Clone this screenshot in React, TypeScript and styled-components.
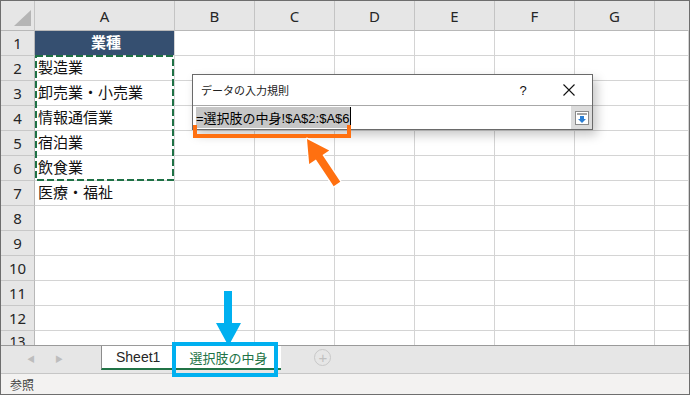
import React from 'react';
import styled, { createGlobalStyle } from 'styled-components';

const GlobalStyle = createGlobalStyle`
  html, body {
    margin: 0;
    padding: 0;
    background: #ffffff;
  }
  * {
    box-sizing: border-box;
  }
`;

const JP = `"Liberation Sans", "Noto Sans CJK JP", sans-serif`;

const columns = ['A', 'B', 'C', 'D', 'E', 'F', 'G', ''];
const cells: { [row: number]: string } = {
  2: '製造業',
  3: '卸売業・小売業',
  4: '情報通信業',
  5: '宿泊業',
  6: '飲食業',
  7: '医療・福祉',
};

const Frame = styled.div`
  position: relative;
  width: 690px;
  height: 395px;
  border: 1px solid #6e6e6e;
  display: flex;
  flex-direction: column;
  overflow: hidden;
  font-family: ${JP};
`;

const Sheet = styled.div`
  height: 344px;
  overflow: hidden;
  display: grid;
  grid-template-columns: 34px 140px repeat(6, 80px) 1fr;
  grid-template-rows: 30px repeat(12, 25px) 20px;
`;

const HeadCell = styled.div<{ $last?: boolean }>`
  background: #e6e6e6;
  border-right: 1px solid ${(p) => (p.$last ? '#e6e6e6' : '#c4c4c4')};
  border-bottom: 1px solid #b8b8b8;
  display: flex;
  align-items: center;
  justify-content: center;
  font-family: "Noto Sans", "Liberation Sans", sans-serif;
  font-size: 15px;
  color: #262626;
  padding-top: 1px;
`;

const Corner = styled(HeadCell)`
  align-items: flex-end;
  justify-content: flex-end;
  padding: 0 3px 4px 0;
`;

const RowHead = styled.div<{ $clipped?: boolean }>`
  background: #e6e6e6;
  border-right: 1px solid #b8b8b8;
  border-bottom: ${(p) => (p.$clipped ? 'none' : '1px solid #c8c8c8')};
  display: flex;
  align-items: ${(p) => (p.$clipped ? 'flex-start' : 'center')};
  justify-content: center;
  font-family: "Noto Sans", "Liberation Sans", sans-serif;
  font-size: ${(p) => (p.$clipped ? '14px' : '15px')};
  line-height: ${(p) => (p.$clipped ? '18px' : 'normal')};
  padding-top: ${(p) => (p.$clipped ? '2px' : '0')};
  color: #262626;
`;

const Cell = styled.div<{ $title?: boolean }>`
  border-right: 1px solid #d4d4d4;
  border-bottom: 1px solid #d4d4d4;
  background: ${(p) => (p.$title ? '#354f70' : '#ffffff')};
  color: ${(p) => (p.$title ? '#ffffff' : '#111111')};
  font-weight: ${(p) => (p.$title ? 700 : 400)};
  justify-content: ${(p) => (p.$title ? 'center' : 'flex-start')};
  display: flex;
  align-items: center;
  padding: 0 0 3px 3px;
  font-size: 15px;
  white-space: nowrap;
  overflow: visible;
`;

const TabBar = styled.div`
  height: 28px;
  background: #e6e6e6;
  border-top: 1px solid #9a9a9a;
  display: flex;
  align-items: flex-start;
`;

const Nav = styled.div`
  width: 100px;
  height: 24px;
  display: flex;
  align-items: center;
  padding-left: 26px;
  gap: 20px;
  color: #bdbdbd;
  font-size: 8px;
`;

const Tab = styled.div<{ $active?: boolean }>`
  height: 24px;
  padding: 0 14px;
  background: #ffffff;
  border-left: ${(p) => (p.$active ? 'none' : '1px solid #8c8c8c')};
  border-bottom: 2px solid #217346;
  display: flex;
  align-items: center;
  font-size: ${(p) => (p.$active ? '13px' : '14px')};
  color: ${(p) => (p.$active ? '#217346' : '#262626')};
  font-family: ${(p) => (p.$active ? JP : '"Liberation Sans", sans-serif')};
  margin-left: ${(p) => (p.$active ? '1px' : '0')};
`;

const AddSheet = styled.div`
  margin: 3px 0 0 33px;
  width: 17px;
  height: 17px;
  border-radius: 50%;
  border: 1.5px solid #c8c8c8;
  color: #c0c0c0;
  display: flex;
  align-items: center;
  justify-content: center;
  font-size: 15px;
  line-height: 1;
  font-family: "Liberation Sans", sans-serif;
`;

const StatusBar = styled.div`
  flex: 1;
  background: #f3f2f1;
  border-top: 1px solid #c6c6c6;
  display: flex;
  align-items: center;
  padding-left: 9px;
  font-size: 12px;
  color: #444444;
`;

const Dialog = styled.div`
  position: absolute;
  left: 191px;
  top: 73px;
  width: 401px;
  height: 56px;
  background: #ffffff;
  border: 1px solid #6a6a6a;
  box-shadow: 4px 5px 10px rgba(0, 0, 0, 0.22);
  display: flex;
  flex-direction: column;
`;

const DialogTitle = styled.div`
  height: 30px;
  display: flex;
  align-items: center;
  padding: 0 0 0 8px;
  font-size: 11px;
  color: #222222;
`;

const TitleText = styled.span`
  flex: 1;
`;

const TitleButton = styled.span`
  width: 46px;
  display: flex;
  justify-content: center;
  align-items: center;
  font-family: "Liberation Sans", sans-serif;
  font-size: 13px;
  color: #111111;
`;

const InputRow = styled.div`
  flex: 1;
  display: flex;
  border-top: 1px solid #a8a8a8;
`;

const Field = styled.div`
  flex: 1;
  display: flex;
  align-items: center;
  padding-left: 3px;
  font-size: 13px;
  color: #000000;
`;

const Selected = styled.span`
  background: #c6c6c6;
  padding: 1px 0;
  border-right: 1px solid #000000;
`;

const RangeButton = styled.div`
  width: 21px;
  background: #dcdcdc;
  display: flex;
  align-items: center;
  justify-content: center;
`;

const Bracket = styled.div`
  position: absolute;
  left: 192px;
  top: 124px;
  width: 158px;
  height: 13px;
  border: 4px solid #ff7010;
  border-top: none;
`;

const Highlight = styled.div`
  position: absolute;
  left: 171px;
  top: 341px;
  width: 106px;
  height: 35px;
  border: 4px solid #00b0f0;
`;

const Overlay = styled.svg`
  position: absolute;
  left: -1px;
  top: -1px;
  width: 690px;
  height: 395px;
  pointer-events: none;
`;

function RangeIcon() {
  return (
    <svg width="14" height="14" viewBox="0 0 14 14">
      <rect x="0.5" y="0.5" width="13" height="13" fill="#ffffff" stroke="#8a8a8a" />
      <line x1="2" y1="3" x2="12" y2="3" stroke="#4a4a4a" strokeWidth="1" />
      <path d="M5 5 H9 V8 H11 L7 12 L3 8 H5 Z" fill="#2b7fd4" />
    </svg>
  );
}

function CloseIcon() {
  return (
    <svg width="12" height="12" viewBox="0 0 12 12">
      <path d="M0.5 0.5 L11.5 11.5 M11.5 0.5 L0.5 11.5" stroke="#111111" strokeWidth="1.1" />
    </svg>
  );
}

export default function App() {
  const rows = Array.from({ length: 13 }, (_, i) => i + 1);
  return (
    <>
      <GlobalStyle />
      <Frame>
        <Sheet>
          <Corner>
            <svg width="17" height="16" viewBox="0 0 17 16">
              <polygon points="17,0 17,16 0,16" fill="#b5b5b5" />
            </svg>
          </Corner>
          {columns.map((c, i) => (
            <HeadCell key={c + i} $last={i === columns.length - 1}>{c}</HeadCell>
          ))}
          {rows.map((r) => (
            <React.Fragment key={r}>
              <RowHead $clipped={r === 13}>{r}</RowHead>
              <Cell $title={r === 1}>{r === 1 ? '業種' : cells[r] || ''}</Cell>
              {columns.slice(1).map((c, i) => (
                <Cell key={c + i} />
              ))}
            </React.Fragment>
          ))}
        </Sheet>
        <TabBar>
          <Nav>
            <span>◀</span>
            <span>▶</span>
          </Nav>
          <Tab>Sheet1</Tab>
          <Tab $active>選択肢の中身</Tab>
          <AddSheet>+</AddSheet>
        </TabBar>
        <StatusBar>参照</StatusBar>

        <Dialog>
          <DialogTitle>
            <TitleText>データの入力規則</TitleText>
            <TitleButton>?</TitleButton>
            <TitleButton>
              <CloseIcon />
            </TitleButton>
          </DialogTitle>
          <InputRow>
            <Field>
              <Selected>=選択肢の中身!$A$2:$A$6</Selected>
            </Field>
            <RangeButton>
              <RangeIcon />
            </RangeButton>
          </InputRow>
        </Dialog>

        <Bracket />
        <Highlight />

        <Overlay viewBox="0 0 690 395">
          <rect x="36" y="56" width="137" height="124" fill="none" stroke="#1e7145" strokeWidth="2" strokeDasharray="7 3" />
          <polygon
            points="307,139 329.2,150.6 322.5,155.1 340.3,181.8 333.7,186.2 315.9,159.5 309.2,164"
            fill="#ff7010"
            stroke="#ffffff"
            strokeWidth="3"
            strokeLinejoin="round"
            paintOrder="stroke"
          />
          <polygon points="224,291 232,291 232,323 241,323 228.5,346 216,323 224,323" fill="#00b0f0" />
        </Overlay>
      </Frame>
    </>
  );
}
